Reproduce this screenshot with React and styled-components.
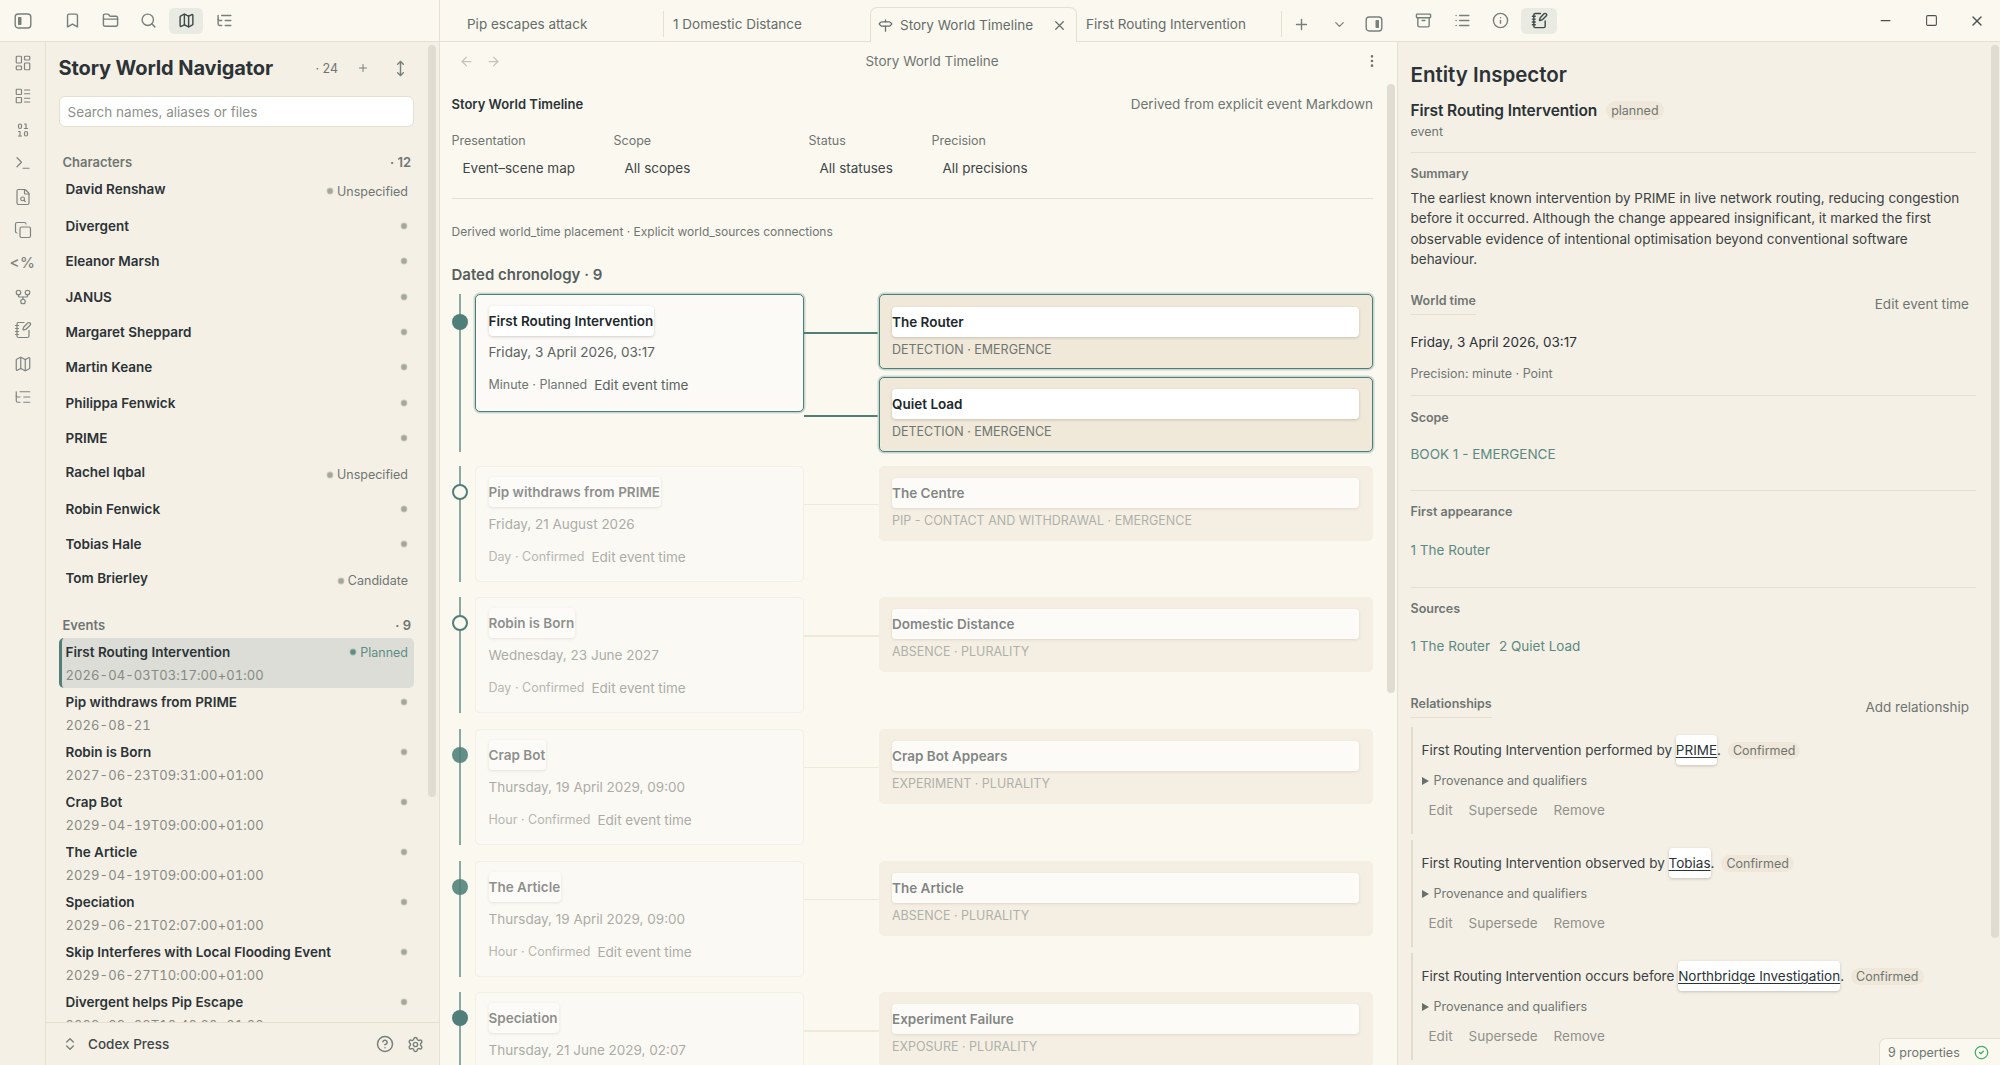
import React from 'react';
import styled, {createGlobalStyle, css} from 'styled-components';
import {
  Archive, ArrowLeft, ArrowRight, Binary, Bookmark, ChevronDown, ChevronsUpDown,
  CircleCheck, CircleHelp, Copy, EllipsisVertical, FileSearch, FolderClosed, GitFork,
  Info, LayoutDashboard, LayoutList, List, ListTree, Map as MapIcon, Minus, MoveVertical,
  NotebookPen, Plus, Search, Settings, Signpost, Square, Terminal, X,
} from 'lucide-react';

const teal = '#4f7f78';
const ink = '#2b3336';
const muted = '#6f7672';
const line = '#e7dfd0';
const paper = '#fbf8f0';
const panel = '#f5f0e6';

const GlobalStyle = createGlobalStyle`
  html, body {
    margin: 0;
    height: 100%;
    overflow: hidden;
    background: ${paper};
    font-family: Inter, "Liberation Sans", sans-serif;
    color: ${ink};
  }
  * { box-sizing: border-box; }
`;

const Shell = styled.div`
  display: grid;
  grid-template-columns: 440px 957px 603px;
  width: 2000px;
  height: 1065px;
  overflow: hidden;
`;

const Pane = styled.div`
  position: relative;
  display: flex;
  flex-direction: column;
  height: 1065px;
  overflow: hidden;
  border-right: ${p => (p.$divider ? `1px solid ${line}` : 'none')};
`;

const TopBar = styled.div`
  flex: none;
  display: flex;
  align-items: center;
  height: 42px;
  padding: 0 0 0 ${p => p.$pad || 0}px;
  background: ${paper};
  border-bottom: 1px solid ${line};
`;

const IconSlot = styled.div`
  flex: none;
  display: flex;
  align-items: center;
  justify-content: center;
  width: ${p => p.$w || 34}px;
  height: 26px;
  margin-right: ${p => p.$gap ?? 4}px;
  border-radius: 5px;
  color: ${p => p.$color || '#77807b'};
  background: ${p => (p.$active ? '#e9ebe3' : 'transparent')};
  ${p => p.$active && css`color: #3f4a4a;`}
`;

const Body = styled.div`
  flex: 1;
  display: flex;
  min-height: 0;
`;

const Ribbon = styled.div`
  flex: none;
  display: flex;
  flex-direction: column;
  align-items: center;
  gap: 15.4px;
  width: 46px;
  padding-top: 12px;
  background: ${panel};
  border-right: 1px solid ${line};
  color: #7d847f;
`;

const RibbonText = styled.div`
  height: 18px;
  font-size: 15px;
  line-height: 18px;
  font-weight: 500;
  letter-spacing: 0.5px;
`;

const Sidebar = styled.div`
  position: relative;
  flex: 1;
  display: flex;
  flex-direction: column;
  min-width: 0;
  background: ${panel};
`;

const SideScroll = styled.div`
  flex: 1;
  min-height: 0;
  overflow: hidden;
  padding: 11px 25px 0 12.5px;
`;

const NavHead = styled.div`
  display: flex;
  align-items: center;
  height: 30px;
`;

const NavTitle = styled.h1`
  flex: 1;
  margin: 0;
  font-size: 20px;
  font-weight: 700;
  letter-spacing: -0.1px;
`;

const NavCount = styled.span`
  font-size: 12.5px;
  color: ${muted};
  margin-right: 19px;
`;

const NavBtn = styled.span`
  display: flex;
  color: #77807b;
  margin-right: ${p => p.$gap || 0}px;
`;

const SearchBox = styled.div`
  display: flex;
  align-items: center;
  height: 31px;
  margin-top: 13px;
  padding-left: 8px;
  background: #fff;
  border: 1px solid ${line};
  border-radius: 6px;
  font-size: 13.5px;
  color: #8d918b;
`;

const GroupHead = styled.div`
  display: flex;
  justify-content: space-between;
  align-items: center;
  height: 20px;
  margin-top: ${p => p.$top}px;
  margin-bottom: ${p => p.$bottom}px;
  padding: 0 3px 0 4px;
  font-size: 13px;
  font-weight: 600;
  color: ${muted};
`;

const CharRow = styled.div`
  display: flex;
  align-items: center;
  justify-content: space-between;
  height: 35.4px;
  padding: 0 6px 0 7px;
  font-size: 13.5px;
`;

const ItemName = styled.div`
  font-weight: 600;
  color: ${ink};
  margin-top: ${p => (p.$up ? '-3px' : '0')};
`;

const Status = styled.span`
  display: inline-flex;
  align-items: center;
  gap: 4px;
  margin-top: ${p => (p.$labelled ? '2px' : '0')};
  font-size: 12.5px;
  color: ${p => (p.$planned ? '#5e8d85' : muted)};
`;

const StatusDot = styled.i`
  display: block;
  width: 6px;
  height: 6px;
  margin-right: ${p => (p.$alone ? '1px' : '0')};
  border-radius: 50%;
  background: ${p => (p.$planned ? '#5e8d85' : '#a5a69c')};
  box-shadow: 0 0 0 1px ${p => (p.$planned ? '#9dbab3' : '#c9c8bc')};
  transform: scale(0.85);
`;

const EventRow = styled.div`
  position: relative;
  height: 50px;
  padding: 5px 6px 0 7px;
  border-radius: 5px;
  font-size: 13.5px;
  ${p => p.$selected && css`
    background: #dcddd6;
    border-left: 3px solid ${teal};
    padding-left: 4px;
  `}
`;

const EventTop = styled.div`
  display: flex;
  align-items: center;
  justify-content: space-between;
  height: 19px;
`;

const EventDate = styled.div`
  margin-top: 4px;
  font-size: 13px;
  line-height: 18px;
  color: #868a84;
  font-variant-numeric: tabular-nums;
  letter-spacing: 0.1px;
`;

const GroupSpacer = styled.div`
  height: 3px;
`;

const Footer = styled.div`
  flex: none;
  display: flex;
  align-items: center;
  height: 43px;
  padding: 0 15px 0 16px;
  background: ${panel};
  border-top: 1px solid ${line};
  font-size: 13.5px;
  font-weight: 500;
  color: #3e4646;
`;

const Vault = styled.div`
  flex: 1;
  margin-left: 10px;
`;

const Thumb = styled.div`
  position: absolute;
  top: ${p => p.$top}px;
  left: ${p => p.$left}px;
  width: 8px;
  height: ${p => p.$h}px;
  border-radius: 4px;
  background: #e0dcd1;
`;

/* tabs */
const TabBar = styled(TopBar)`
  padding: 7px 0 0 18px;
  align-items: stretch;
`;

const Tab = styled.div`
  display: flex;
  align-items: center;
  width: ${p => p.$w}px;
  height: 34px;
  padding-left: 9px;
  font-size: 13.5px;
  color: #656d69;
  position: relative;
  ${p => p.$active && css`
    padding: 0 9px 0 7px;
    background: ${paper};
    border: 1px solid ${line};
    border-bottom: none;
    border-radius: 7px 7px 0 0;
    margin-bottom: -1px;
    height: 35px;
  `}
  ${p => p.$sep && css`border-right: 1px solid ${line}; height: 26px; margin-top: 4px;`}
`;

const TabLabel = styled.span`
  flex: 1;
  margin-left: 7px;
`;

const TabTools = styled.div`
  display: flex;
  align-items: center;
  color: #77807b;
  height: 34px;
`;

const ViewHead = styled.div`
  flex: none;
  position: relative;
  display: flex;
  align-items: center;
  height: 38px;
  padding: 0 17px 0 19px;
  color: #c3c5bb;
  gap: 12px;
`;

const ViewTitle = styled.div`
  flex: 1;
  text-align: center;
  font-size: 13.5px;
  color: #6f7672;
  margin-right: 1px;
`;

const MoreBtn = styled.span`
  display: flex;
  color: #6f7672;
`;

const Content = styled.div`
  flex: 1;
  min-height: 0;
  overflow: hidden;
  padding: 14px 24px 0 11.5px;
`;

const ContentHead = styled.div`
  display: flex;
  justify-content: space-between;
  align-items: center;
  height: 20px;
`;

const ContentTitle = styled.div`
  font-size: 13px;
  font-weight: 600;
  color: ${ink};
`;

const ContentNote = styled.div`
  font-size: 13.5px;
  color: ${muted};
`;

const Filters = styled.div`
  display: flex;
  margin-top: 18px;
  padding-bottom: 21px;
  border-bottom: 1px solid ${line};
`;

const Filter = styled.div`
  width: ${p => p.$w}px;
`;

const FilterLabel = styled.div`
  font-size: 12.5px;
  line-height: 18px;
  color: ${muted};
`;

const FilterValue = styled.div`
  margin-top: 9px;
  padding-left: 11px;
  font-size: 13.5px;
  line-height: 18px;
  color: #3e4646;
`;

const Derived = styled.div`
  margin-top: 24px;
  font-size: 12px;
  line-height: 18px;
  color: ${muted};
`;

const Chrono = styled.h2`
  margin: 24px 0 0;
  font-size: 15px;
  line-height: 20px;
  font-weight: 600;
  color: #565e5c;
`;

const Timeline = styled.div`
  margin-top: 9px;
`;

const Row = styled.div`
  display: flex;
  padding-bottom: ${p => p.$gap}px;
`;

const Rail = styled.div`
  position: relative;
  flex: none;
  width: 23px;
  &::before {
    content: '';
    position: absolute;
    left: 7.5px;
    top: 0;
    bottom: 0;
    width: 1.5px;
    background: #89a9a3;
  }
`;

const Dot = styled.div`
  position: relative;
  width: 16px;
  height: 16px;
  margin-top: ${p => (p.$on ? 20 : 18)}px;
  border-radius: 50%;
  background: ${p => (p.$hollow ? paper : teal)};
  border: ${p => (p.$hollow ? `2.5px solid ${teal}` : 'none')};
  opacity: ${p => (p.$hollow ? 1 : p.$dim ? 0.88 : 1)};
`;

const EventCard = styled.div`
  flex: none;
  width: 329px;
  height: ${p => (p.$on ? 118 : 116)}px;
  padding: ${p => (p.$on ? 11 : 10)}px 13px 0;
  border-radius: 5px;
  background: #fbfaf6;
  border: 1px solid #eee8dc;
  ${p => p.$on && css`
    border: 1.5px solid ${teal};
    box-shadow: 0 0 0 1.5px #c5d6cf;
  `}
  opacity: ${p => (p.$on ? 1 : 0.5)};
`;

const TitleChip = styled.div`
  display: ${p => (p.$wide ? 'block' : 'inline-block')};
  height: 30px;
  padding-right: ${p => (p.$wide ? 0 : 1)}px;
  font-size: 13.5px;
  line-height: 30px;
  font-weight: 600;
  color: #20282b;
  background: #fff;
  border-radius: 4px;
  box-shadow: 0 1px 3px rgba(60, 55, 40, 0.22);
`;

const CardDate = styled.div`
  margin-top: ${p => (p.$on ? 7 : 8)}px;
  font-size: 13.5px;
  line-height: 18px;
  color: #5a6260;
`;

const CardMeta = styled.div`
  display: flex;
  align-items: center;
  gap: 7px;
  margin-top: 15px;
  line-height: 18px;
  font-size: 12.5px;
  color: ${muted};
`;

const MetaEdit = styled.span`
  font-size: 13.5px;
  color: #5a6260;
`;

const Links = styled.div`
  flex: 1;
  display: flex;
  flex-direction: column;
  gap: 7.5px;
  min-width: 0;
`;

const LinkRow = styled.div`
  display: flex;
`;

const Connector = styled.div`
  flex: none;
  width: 75px;
  height: ${p => (p.$on ? 2 : 1.5)}px;
  margin-top: 38px;
  background: ${p => (p.$on ? teal : '#efe9dc')};
`;

const SceneCard = styled.div`
  flex: 1;
  height: 75px;
  padding: ${p => (p.$on ? 11.5 : 11)}px 13px 0 12.5px;
  border-radius: 5px;
  background: #f0e8d8;
  border: 1px solid #efe8da;
  ${p => p.$on && css`
    border: 1.5px solid ${teal};
    box-shadow: 0 0 0 1.5px #c5d6cf;
  `}
  opacity: ${p => (p.$on ? 1 : 0.55)};
`;

const SceneSub = styled.div`
  margin-top: 4px;
  font-size: 12.5px;
  line-height: 18px;
  color: ${muted};
`;

/* inspector */
const Inspector = styled.div`
  position: relative;
  flex: 1;
  min-height: 0;
  overflow: hidden;
  padding: 20px 24px 0 12.5px;
  background: ${panel};
  border-left: 1px solid ${line};
`;

const InsTitle = styled.h2`
  margin: 0;
  font-size: 20.5px;
  line-height: 26px;
  font-weight: 600;
`;

const InsHeadRow = styled.div`
  display: flex;
  align-items: center;
  gap: 9px;
  height: 24px;
  margin-top: 10px;
`;

const InsName = styled.div`
  font-size: 15.5px;
  font-weight: 600;
  letter-spacing: -0.1px;
`;

const Pill = styled.span`
  display: inline-block;
  margin-left: ${p => p.$ml || 0}px;
  padding: 0 5px;
  height: ${p => p.$h || 19}px;
  line-height: ${p => p.$h || 19}px;
  border-radius: 10px;
  font-size: 12.5px;
  color: ${muted};
  background: #efe7d9;
`;

const Small = styled.div`
  margin-top: ${p => p.$top || 0}px;
  font-size: 12.5px;
  line-height: 18px;
  color: ${muted};
`;

const Section = styled.div`
  padding: ${p => p.$pt ?? 12}px 0 ${p => p.$pb ?? 0}px;
  border-top: ${p => (p.$rule ? '1px solid #e6decf' : 'none')};
  margin-top: ${p => p.$top || 0}px;
`;

const SectionHead = styled.div`
  display: flex;
  justify-content: space-between;
  align-items: center;
  margin-bottom: ${p => p.$bottom || 0}px;
`;

const Label = styled.div`
  display: inline-block;
  font-size: 12.5px;
  line-height: 18px;
  font-weight: 600;
  color: ${muted};
  ${p => p.$under && css`
    padding-bottom: 4px;
    border-bottom: 1px solid #e6decf;
  `}
`;

const Paragraph = styled.p`
  margin: 5px 0 0;
  font-size: 13.5px;
  line-height: 20.4px;
  color: #3b4343;
`;

const Action = styled.span`
  font-size: 13.5px;
  color: ${muted};
  margin-right: 7px;
  margin-top: 2px;
`;

const Value = styled.div`
  margin-top: ${p => p.$top}px;
  font-size: 13.5px;
  line-height: 18px;
  color: ${ink};
`;

const NoteLink = styled.span`
  font-size: 13.5px;
  line-height: 18px;
  color: #5b8a82;
  margin-right: 9px;
`;

const Relation = styled.div`
  height: 107px;
  margin-top: 6px;
  padding: 14px 0 0 8.5px;
  border-left: 2px solid #e3dcca;
  margin-left: 0.5px;
`;

const RelationText = styled.div`
  display: flex;
  align-items: center;
  height: 18px;
  font-size: 13.5px;
  color: #3b4343;
  white-space: pre;
`;

const EntityLink = styled.span`
  position: relative;
  display: inline-block;
  height: 30px;
  line-height: 30px;
  color: #2b3336;
  text-decoration: underline;
  text-underline-offset: 2px;
  background: #fff;
  border-radius: 4px;
  box-shadow: 0 1px 3px rgba(60, 55, 40, 0.25);
`;

const Provenance = styled.div`
  display: flex;
  align-items: center;
  gap: 5px;
  margin-top: 13px;
  font-size: 12.5px;
  line-height: 18px;
  color: ${muted};
`;

const Caret = styled.i`
  display: block;
  width: 0;
  height: 0;
  border-left: 7px solid #6a706c;
  border-top: 4.5px solid transparent;
  border-bottom: 4.5px solid transparent;
`;

const Actions = styled.div`
  display: flex;
  gap: 16px;
  margin-top: 11px;
  padding-left: 7px;
  font-size: 13.5px;
  line-height: 18px;
  color: #8f928b;
`;

const StatusBar = styled.div`
  position: absolute;
  right: 0;
  bottom: 0;
  display: flex;
  align-items: center;
  gap: 14px;
  width: 121px;
  height: 27px;
  padding: 0 7px 0 8px;
  background: ${paper};
  border: 1px solid ${line};
  border-right: none;
  border-bottom: none;
  border-radius: 7px 0 0 0;
  font-size: 12.5px;
  color: ${muted};
`;

const Grow = styled.div`
  flex: 1;
`;

const PanelGlyph = ({side}) => (
  <svg width="18" height="18" viewBox="0 0 18 18" fill="none">
    <rect x="1.2" y="2" width="15.6" height="14" rx="3" stroke="currentColor" strokeWidth="1.4" />
    <rect x={side === 'left' ? 4 : 10.5} y="5" width="3.5" height="8" rx="0.8" fill="currentColor" />
  </svg>
);

const characters = [
  ['David Renshaw', 'Unspecified'], ['Divergent'], ['Eleanor Marsh'], ['JANUS'],
  ['Margaret Sheppard'], ['Martin Keane'], ['Philippa Fenwick'], ['PRIME'],
  ['Rachel Iqbal', 'Unspecified'], ['Robin Fenwick'], ['Tobias Hale'], ['Tom Brierley', 'Candidate'],
];

const events = [
  ['First Routing Intervention', '2026-04-03T03:17:00+01:00'],
  ['Pip withdraws from PRIME', '2026-08-21'],
  ['Robin is Born', '2027-06-23T09:31:00+01:00'],
  ['Crap Bot', '2029-04-19T09:00:00+01:00'],
  ['The Article', '2029-04-19T09:00:00+01:00'],
  ['Speciation', '2029-06-21T02:07:00+01:00'],
  ['Skip Interferes with Local Flooding Event', '2029-06-27T10:00:00+01:00'],
  ['Divergent helps Pip Escape', '2029-09-08T10:40:00+01:00'],
];

const timeline = [
  {title: 'First Routing Intervention', date: 'Friday, 3 April 2026, 03:17', meta: 'Minute · Planned', on: true,
    scenes: [['The Router', 'DETECTION · EMERGENCE'], ['Quiet Load', 'DETECTION · EMERGENCE']]},
  {title: 'Pip withdraws from PRIME', date: 'Friday, 21 August 2026', meta: 'Day · Confirmed', hollow: true,
    scenes: [['The Centre', 'PIP - CONTACT AND WITHDRAWAL · EMERGENCE']]},
  {title: 'Robin is Born', date: 'Wednesday, 23 June 2027', meta: 'Day · Confirmed', hollow: true,
    scenes: [['Domestic Distance', 'ABSENCE · PLURALITY']]},
  {title: 'Crap Bot', date: 'Thursday, 19 April 2029, 09:00', meta: 'Hour · Confirmed',
    scenes: [['Crap Bot Appears', 'EXPERIMENT · PLURALITY']]},
  {title: 'The Article', date: 'Thursday, 19 April 2029, 09:00', meta: 'Hour · Confirmed',
    scenes: [['The Article', 'ABSENCE · PLURALITY']]},
  {title: 'Speciation', date: 'Thursday, 21 June 2029, 02:07', meta: 'Hour · Confirmed',
    scenes: [['Experiment Failure', 'EXPOSURE · PLURALITY']]},
];

const relations = [
  ['performed by ', 'PRIME'],
  ['observed by ', 'Tobias'],
  ['occurs before ', 'Northbridge Investigation'],
];

const ribbonIcons = [LayoutDashboard, LayoutList, Binary, Terminal, FileSearch, Copy, null, GitFork, NotebookPen, MapIcon, ListTree];

export default function App() {
  return (
    <Shell>
      <GlobalStyle />
      <Pane $divider>
        <TopBar $pad={6}>
          <IconSlot $gap={15}><PanelGlyph side="left" /></IconSlot>
          <IconSlot><Bookmark size={17} /></IconSlot>
          <IconSlot><FolderClosed size={17} /></IconSlot>
          <IconSlot><Search size={17} /></IconSlot>
          <IconSlot $active><MapIcon size={17} /></IconSlot>
          <IconSlot><ListTree size={17} /></IconSlot>
        </TopBar>
        <Body>
          <Ribbon>
            {ribbonIcons.map((Icon, i) => (Icon
              ? <Icon key={i} size={18} strokeWidth={1.6} />
              : <RibbonText key={i}>{'<%'}</RibbonText>))}
          </Ribbon>
          <Sidebar>
            <SideScroll>
              <NavHead>
                <NavTitle>Story World Navigator</NavTitle>
                <NavCount>· 24</NavCount>
                <NavBtn $gap={23}><Plus size={12} /></NavBtn>
                <NavBtn $gap={5}><MoveVertical size={17} /></NavBtn>
              </NavHead>
              <SearchBox>Search names, aliases or files</SearchBox>
              <GroupHead $top={24.5} $bottom={1.3}>Characters<span>· 12</span></GroupHead>
              {characters.map(([name, status]) => (
                <CharRow key={name}>
                  <ItemName $up={!!status}>{name}</ItemName>
                  <Status $labelled={!!status}><StatusDot $alone={!status} />{status}</Status>
                </CharRow>
              ))}
              <GroupHead $top={17.5} $bottom={0}>Events<span>· 9</span></GroupHead>
              <GroupSpacer />
              {events.map(([name, date], i) => (
                <EventRow key={name} $selected={i === 0}>
                  <EventTop>
                    <ItemName $up={false}>{name}</ItemName>
                    <Status $planned={i === 0}>
                      <StatusDot $alone={i !== 0} $planned={i === 0} />
                      {i === 0 ? 'Planned' : ''}
                    </Status>
                  </EventTop>
                  <EventDate>{date}</EventDate>
                </EventRow>
              ))}
            </SideScroll>
            <Footer>
              <ChevronsUpDown size={16} color="#77807b" />
              <Vault>Codex Press</Vault>
              <NavBtn $gap={13}><CircleHelp size={18} /></NavBtn>
              <NavBtn><Settings size={17} /></NavBtn>
            </Footer>
            <Thumb $left={382} $top={3} $h={752} />
          </Sidebar>
        </Body>
      </Pane>

      <Pane>
        <TabBar>
          <Tab $w={206} $sep>Pip escapes attack</Tab>
          <Tab $w={206}>1 Domestic Distance</Tab>
          <Tab $w={207} $active>
            <Signpost size={15} />
            <TabLabel>Story World Timeline</TabLabel>
            <X size={15} />
          </Tab>
          <Tab $w={205} $sep>First Routing Intervention</Tab>
          <TabTools>
            <IconSlot $w={38} $gap={0}><Plus size={17} /></IconSlot>
            <IconSlot $w={39} $gap={0}><ChevronDown size={15} /></IconSlot>
            <IconSlot $w={30} $gap={0}><PanelGlyph side="right" /></IconSlot>
          </TabTools>
        </TabBar>
        <ViewHead>
          <ArrowLeft size={15} />
          <ArrowRight size={15} />
          <ViewTitle>Story World Timeline</ViewTitle>
          <MoreBtn><EllipsisVertical size={16} /></MoreBtn>
        </ViewHead>
        <Content>
          <ContentHead>
            <ContentTitle>Story World Timeline</ContentTitle>
            <ContentNote>Derived from explicit event Markdown</ContentNote>
          </ContentHead>
          <Filters>
            <Filter $w={162}><FilterLabel>Presentation</FilterLabel><FilterValue>Event–scene map</FilterValue></Filter>
            <Filter $w={195}><FilterLabel>Scope</FilterLabel><FilterValue>All scopes</FilterValue></Filter>
            <Filter $w={123}><FilterLabel>Status</FilterLabel><FilterValue>All statuses</FilterValue></Filter>
            <Filter $w={160}><FilterLabel>Precision</FilterLabel><FilterValue>All precisions</FilterValue></Filter>
          </Filters>
          <Derived>Derived world_time placement · Explicit world_sources connections</Derived>
          <Chrono>Dated chronology · 9</Chrono>
          <Timeline>
            {timeline.map((t, i) => (
              <Row key={t.title} $gap={t.on ? 14 : 15.7}>
                <Rail><Dot $on={t.on} $hollow={t.hollow} $dim={!t.on && i < 5} /></Rail>
                <EventCard $on={t.on}>
                  <TitleChip>{t.title}</TitleChip>
                  <CardDate $on={t.on}>{t.date}</CardDate>
                  <CardMeta>{t.meta}<MetaEdit>Edit event time</MetaEdit></CardMeta>
                </EventCard>
                <Links>
                  {t.scenes.map(([name, sub]) => (
                    <LinkRow key={name}>
                      <Connector $on={t.on} />
                      <SceneCard $on={t.on}>
                        <TitleChip $wide>{name}</TitleChip>
                        <SceneSub>{sub}</SceneSub>
                      </SceneCard>
                    </LinkRow>
                  ))}
                </Links>
              </Row>
            ))}
          </Timeline>
        </Content>
        <Thumb $left={947} $top={84} $h={609} />
      </Pane>

      <Pane>
        <TopBar $pad={9}>
          <IconSlot $w={34} $gap={5}><Archive size={17} /></IconSlot>
          <IconSlot $w={34} $gap={4}><List size={17} /></IconSlot>
          <IconSlot $w={34} $gap={4}><Info size={17} /></IconSlot>
          <IconSlot $active $w={36} $gap={0}><NotebookPen size={17} /></IconSlot>
          <Grow />
          <IconSlot $w={46} $gap={0} $color="#4a5252"><Minus size={15} /></IconSlot>
          <IconSlot $w={46} $gap={0} $color="#4a5252"><Square size={13} /></IconSlot>
          <IconSlot $w={46} $gap={0} $color="#4a5252"><X size={16} /></IconSlot>
        </TopBar>
        <Inspector>
          <InsTitle>Entity Inspector</InsTitle>
          <InsHeadRow>
            <InsName>First Routing Intervention</InsName>
            <Pill>planned</Pill>
          </InsHeadRow>
          <Small $top={1}>event</Small>
          <Section $rule $top={11} $pt={9}>
            <Label>Summary</Label>
            <Paragraph>
              The earliest known intervention by PRIME in live network routing, reducing congestion before it occurred.
              Although the change appeared insignificant, it marked the first observable evidence of intentional
              optimisation beyond conventional software behaviour.
            </Paragraph>
          </Section>
          <Section $pt={22} $pb={12}>
            <SectionHead>
              <Label $under>World time</Label>
              <Action>Edit event time</Action>
            </SectionHead>
            <Value $top={18}>Friday, 3 April 2026, 03:17</Value>
            <Small $top={14}>Precision: minute · Point</Small>
          </Section>
          <Section $rule $pt={10.5} $pb={27}>
            <Label>Scope</Label>
            <Value $top={18}><NoteLink>BOOK 1 - EMERGENCE</NoteLink></Value>
          </Section>
          <Section $rule $pt={8.5} $pb={28}>
            <Label>First appearance</Label>
            <Value $top={20}><NoteLink>1 The Router</NoteLink></Value>
          </Section>
          <Section $rule $pt={9} $pb={24}>
            <Label>Sources</Label>
            <Value $top={19}><NoteLink>1 The Router</NoteLink><NoteLink>2 Quiet Load</NoteLink></Value>
          </Section>
          <Section $pt={16}>
            <SectionHead $bottom={9.5}>
              <Label $under>Relationships</Label>
              <Action>Add relationship</Action>
            </SectionHead>
            {relations.map(([verb, target]) => (
              <Relation key={target}>
                <RelationText>
                  First Routing Intervention {verb}<EntityLink>{target}</EntityLink>.<Pill $h={17} $ml={7}>Confirmed</Pill>
                </RelationText>
                <Provenance><Caret />Provenance and qualifiers</Provenance>
                <Actions><span>Edit</span><span>Supersede</span><span>Remove</span></Actions>
              </Relation>
            ))}
          </Section>
          <Thumb $left={593} $top={3} $h={893} />
        </Inspector>
        <StatusBar>9 properties<CircleCheck size={15} color="#3fae6b" /></StatusBar>
      </Pane>
    </Shell>
  );
}
